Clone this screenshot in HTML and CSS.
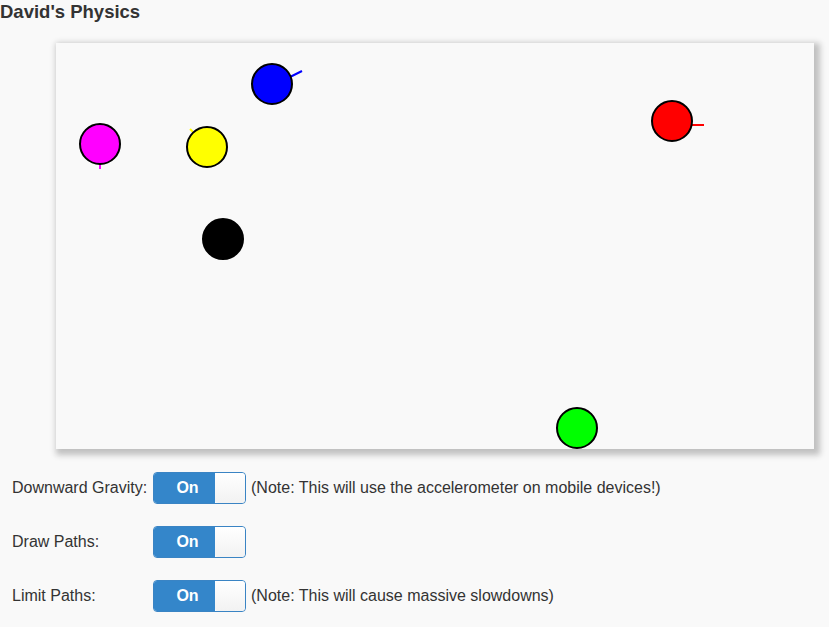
FILE: index.html
```html
<!DOCTYPE html>
<html>
<head>
<meta charset="utf-8">
<link rel="stylesheet" href="styles.css">
</head>
<body>
<h1 class="title">David's Physics</h1>
<div class="stage">
  <svg class="canvas" width="758" height="406" viewBox="0 0 758 406">
    <g stroke-width="2">
      <line x1="232" y1="35" x2="246" y2="28" stroke="#0000ff"/>
      <circle cx="216" cy="41" r="20" fill="#0000ff" stroke="#000"/>
      <line x1="636" y1="82" x2="648" y2="82" stroke="#ff0000"/>
      <circle cx="616" cy="78" r="20" fill="#ff0000" stroke="#000"/>
      <line x1="44" y1="120" x2="44" y2="126" stroke="#ff00ff"/>
      <circle cx="44" cy="101" r="20" fill="#ff00ff" stroke="#000"/>
      <line x1="134" y1="86" x2="137" y2="89" stroke="#ffff00"/>
      <circle cx="151" cy="104" r="20" fill="#ffff00" stroke="#000"/>
      <circle cx="167" cy="196" r="20" fill="#000" stroke="#000"/>
      <circle cx="521" cy="385" r="20" fill="#00ff00" stroke="#000"/>
    </g>
  </svg>
</div>
<div class="controls">
  <div class="label">Downward Gravity:</div>
  <div class="switch"><span class="on">On</span><span class="handle"></span></div>
  <div class="note">(Note: This will use the accelerometer on mobile devices!)</div>

  <div class="label">Draw Paths:</div>
  <div class="switch"><span class="on">On</span><span class="handle"></span></div>
  <div class="note"></div>

  <div class="label">Limit Paths:</div>
  <div class="switch"><span class="on">On</span><span class="handle"></span></div>
  <div class="note">(Note: This will cause massive slowdowns)</div>
</div>
</body>
</html>
```
FILE: styles.css
```css
html, body {
  margin: 0;
  padding: 0;
  background: #f9f9f9;
}
body {
  font-family: "Liberation Sans", Arial, Helvetica, sans-serif;
  color: #333;
  width: 829px;
  height: 627px;
  overflow: hidden;
}
.title {
  margin: 0;
  padding: 2px 0 0 0;
  font-size: 18.5px;
  line-height: 20px;
  font-weight: bold;
  color: #333;
}
.stage {
  padding: 21px 0 0 56px;
  height: 406px;
}
.canvas {
  display: block;
  background: #f9f9f9;
  box-shadow: 3px 3px 6px 3px #c0c0c0;
}
.controls {
  margin-top: 23px;
  padding-left: 12px;
  display: grid;
  grid-template-columns: 141px 93px auto;
  grid-auto-rows: 32px;
  row-gap: 22px;
  align-items: center;
  font-size: 16px;
}
.label {
  white-space: nowrap;
}
.note {
  padding-left: 5px;
  white-space: nowrap;
}
.switch {
  box-sizing: border-box;
  width: 93px;
  height: 32px;
  border: 1px solid #3a84c4;
  border-radius: 4px;
  display: flex;
  overflow: hidden;
  background: #fff;
}
.on {
  flex: 0 0 61px;
  box-sizing: border-box;
  padding-left: 6px;
  background: #3486ca;
  color: #fff;
  font-weight: bold;
  font-size: 16px;
  display: flex;
  align-items: center;
  justify-content: center;
}
.handle {
  flex: 1;
  background: linear-gradient(#fff, #f2f2f2);
  border-radius: 3px;
}
```
